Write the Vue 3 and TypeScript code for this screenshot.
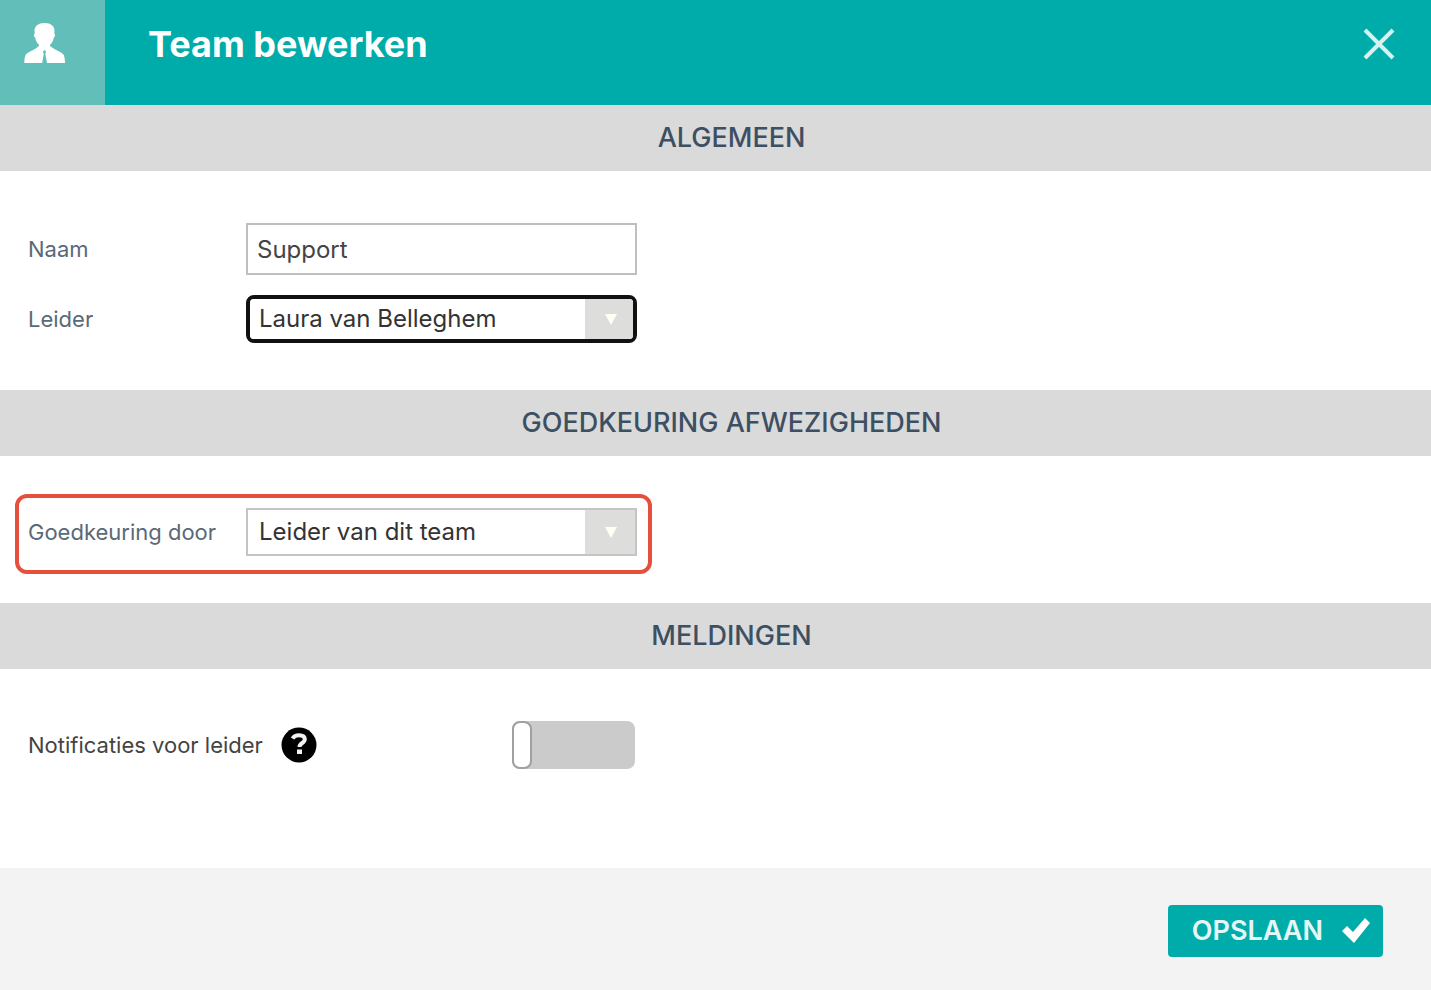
<script setup lang="ts">
import { ref } from 'vue'

const name = ref('Support')
const leader = ref('laura')
const approver = ref('leader')
const notify = ref(false)

const leaders = [{ value: 'laura', label: 'Laura van Belleghem' }]
const approvers = [{ value: 'leader', label: 'Leider van dit team' }]
</script>

<template>
  <form class="dialog" @submit.prevent>
    <header class="header">
      <div class="badge">
        <svg class="person" viewBox="0 0 42 41" aria-hidden="true">
          <path
            d="M20.500 0C14 0 10.500 3 10.500 8c0 1 .2 2 .2 3-1.200 0-1 3 .5 3.500.5 3.500 1.800 5.500 4 7.500-.7 2-3 3.300-6 5C5.500 29 2.500 30 1.500 32 .7 34 .3 37 .3 40h17.900l1.500-9-.7-2.500 1.500-1.500 1.500 1.500-.7 2.500 1.700 9H41c0-3-.4-6-1.200-8-1-2-4-3-7.700-5-3-1.700-5.600-3-6.300-5 2.200-2 3.500-4 4-7.500 1.500-.5 1.700-3.500.5-3.500 0-1 .2-2 .2-3C30.500 3 27 0 20.500 0z"
          />
        </svg>
      </div>
      <h1 class="title">Team bewerken</h1>
      <button class="close" type="button" aria-label="Sluiten">
        <svg viewBox="0 0 32 32" aria-hidden="true"><path d="M2 2 30 30M30 2 2 30" /></svg>
      </button>
    </header>

    <h2 class="band">ALGEMEEN</h2>
    <section class="fields">
      <div class="row">
        <label for="name">Naam</label>
        <input id="name" v-model="name" class="text" type="text" />
      </div>
      <div class="row">
        <label for="leader">Leider</label>
        <div class="picker focused">
          <select id="leader" v-model="leader">
            <option v-for="o in leaders" :key="o.value" :value="o.value">{{ o.label }}</option>
          </select>
          <span class="arrow"><svg viewBox="0 0 12 12" aria-hidden="true"><path d="M0 1h12L6 12z" /></svg></span>
        </div>
      </div>
    </section>

    <h2 class="band">GOEDKEURING AFWEZIGHEDEN</h2>
    <section class="fields">
      <div class="row marked">
        <label for="approver">Goedkeuring door</label>
        <div class="picker">
          <select id="approver" v-model="approver">
            <option v-for="o in approvers" :key="o.value" :value="o.value">{{ o.label }}</option>
          </select>
          <span class="arrow"><svg viewBox="0 0 12 12" aria-hidden="true"><path d="M0 1h12L6 12z" /></svg></span>
        </div>
      </div>
    </section>

    <h2 class="band">MELDINGEN</h2>
    <section class="fields last">
      <div class="notify">
        <label for="notify">Notificaties voor leider</label>
        <button class="help" type="button" aria-label="Help">
          <svg viewBox="0 0 36 36" aria-hidden="true">
            <circle cx="18" cy="18" r="17.500" fill="#000" />
            <path d="M11.500 11.500c1.500-2.300 3.500-3.300 6.500-3.300 3.700 0 5.800 1.500 5.800 4 0 4-5.300 3.600-5.300 7.800" fill="none" stroke="#f2f2f2" stroke-width="4" />
            <rect x="16" y="22.500" width="5" height="4.500" fill="#f2f2f2" />
          </svg>
        </button>
        <input id="notify" v-model="notify" class="toggle" type="checkbox" role="switch" />
      </div>
    </section>

    <footer class="footer">
      <button class="save" type="submit">
        <span>OPSLAAN</span>
        <svg viewBox="0 0 28 26" aria-hidden="true"><path d="M0 13l5-5 6 6L23 0l5 5-16 20z" /></svg>
      </button>
    </footer>
  </form>
</template>

<style>
body {
  margin: 0;
  background: #f3f3f3;
}
</style>

<style scoped>
.dialog {
  display: flex;
  flex-direction: column;
  min-height: 100vh;
  background: #fff;
  color: #444;
  font-family: Inter, "Liberation Sans", sans-serif;
  font-size: 24px;
  line-height: 32px;
}
button,
input,
select {
  box-sizing: border-box;
  margin: 0;
  padding: 0;
  border: 0;
  font: inherit;
  color: inherit;
}
svg {
  display: block;
}
.header {
  display: flex;
  align-items: flex-start;
  background: #00acaa;
  color: #fff;
}
.badge {
  box-sizing: border-box;
  width: 105px;
  height: 105px;
  padding: 23px 0 0 24px;
  background: #61beb9;
}
.person {
  width: 42px;
  height: 41px;
  fill: #fff;
}
.title {
  flex: 1;
  margin: 0;
  padding: 22px 0 0 43px;
  font-size: 36px;
  line-height: 44px;
  font-weight: 700;
}
.close {
  margin: 28px 36px 0 0;
  background: none;
}
.close svg {
  width: 32px;
  height: 32px;
  fill: none;
  stroke: #d5f1f0;
  stroke-width: 4;
}
.band {
  margin: 0;
  padding: 17px 0 17px 32px;
  background: #dadada;
  color: #3d4f62;
  font-size: 27px;
  line-height: 32px;
  font-weight: 500;
  text-align: center;
}
.fields {
  display: flex;
  flex-direction: column;
  gap: 20px;
  padding: 52px 28px 47px;
}
.row {
  display: grid;
  grid-template-columns: 218px 391px;
  align-items: center;
  position: relative;
}
label {
  font-size: 22px;
}
.row label {
  color: #5a6978;
}
.text {
  height: 52px;
  padding: 0 9px;
  border: 2px solid #bfbfbf;
  background: #fff;
}
.picker {
  display: flex;
  height: 48px;
  box-sizing: border-box;
  border: 2px solid #c4c4c4;
  position: relative;
}
.picker select {
  flex: 1;
  padding: 0 60px 0 11px;
  appearance: none;
  background: #fff;
  color: #333;
}
.picker.focused {
  border: 4px solid #111;
  border-radius: 8px;
}
.focused select {
  padding-left: 9px;
  border-radius: 4px;
}
.arrow {
  display: flex;
  align-items: center;
  box-sizing: border-box;
  position: absolute;
  inset: 0 0 0 auto;
  width: 50px;
  padding-left: 20px;
  background: #dddddb;
  pointer-events: none;
}
.focused .arrow {
  width: 48px;
  border-radius: 0 4px 4px 0;
}
.arrow svg {
  width: 12px;
  height: 12px;
  fill: #fffff2;
}
.marked::after {
  content: "";
  position: absolute;
  inset: -14px auto -18px -13px;
  width: 629px;
  border: 4px solid #e64f3c;
  border-radius: 12px;
  pointer-events: none;
}
.last {
  flex: 1;
}
.notify {
  display: flex;
  align-items: center;
  width: 607px;
}
.help {
  margin-left: 18px;
  background: none;
}
.help svg {
  width: 36px;
  height: 36px;
}
.toggle {
  appearance: none;
  display: flex;
  width: 123px;
  height: 48px;
  margin-left: auto;
  border-radius: 8px;
  background: #cbcbcb;
}
.toggle::before {
  content: "";
  box-sizing: border-box;
  width: 20px;
  height: 48px;
  border: 2px solid #a0a0a0;
  border-radius: 8px;
  background: #fff;
}
.toggle:checked {
  justify-content: flex-end;
  background: #00acaa;
}
.footer {
  display: flex;
  justify-content: flex-end;
  padding: 37px 48px 33px;
  background: #f3f3f3;
}
.save {
  display: flex;
  align-items: center;
  gap: 19px;
  height: 52px;
  padding: 0 13px 0 24px;
  border-radius: 4px;
  background: #00acaa;
  color: #e4f6f5;
  font-size: 27px;
  font-weight: 600;
}
.save svg {
  width: 28px;
  height: 26px;
  fill: #fff;
}
</style>
